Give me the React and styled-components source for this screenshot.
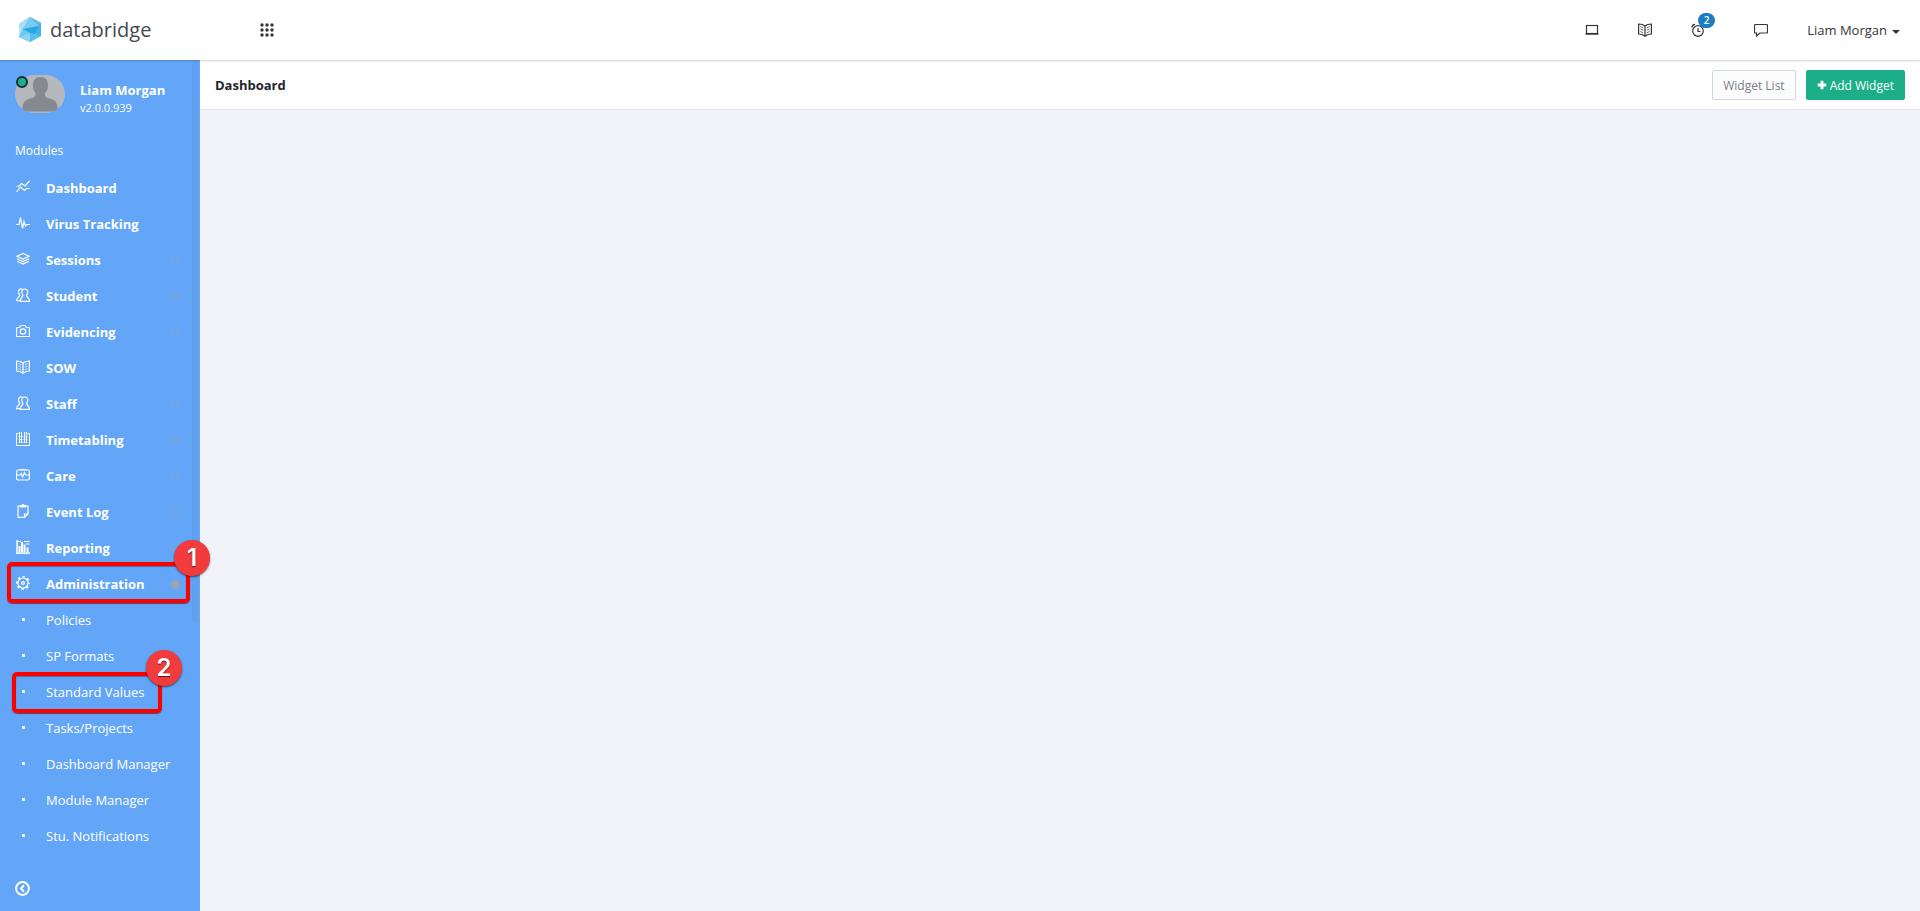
import React from "react";
import styled, { createGlobalStyle } from "styled-components";

const GlobalStyle = createGlobalStyle`
  * {
    box-sizing: border-box;
  }
  body {
    margin: 0;
    font-family: "Open Sans", "Noto Sans", sans-serif;
    font-size: 13px;
    color: #3b3f4a;
    background-color: #f2f3f8;
  }
  a {
    color: inherit;
    text-decoration: none;
  }
  button {
    font-family: inherit;
    cursor: pointer;
  }
`;

const Page = styled.div`
  min-height: 100vh;
  display: flex;
  flex-direction: column;
`;

const Header = styled.header`
  position: relative;
  z-index: 1;
  height: 60px;
  display: flex;
  align-items: center;
  padding: 0 20px 0 18px;
  background-color: #fff;
  box-shadow: 0 1px 2px rgba(0, 0, 0, 0.18);
`;

const Brand = styled.a`
  width: 242px;
  display: flex;
  align-items: center;
  gap: 8px;
  font-size: 20px;
  line-height: 28px;
  color: #444a50;
`;

const IconButton = styled.button`
  position: relative;
  display: flex;
  padding: 0;
  border: none;
  background: none;
  color: #33363c;
`;

const HeaderTools = styled.div`
  margin-left: auto;
  display: flex;
  align-items: center;
  gap: 39px;
`;

const ReminderButton = styled(IconButton)`
  margin-right: 10px;
`;

const Count = styled.span`
  position: absolute;
  top: -10px;
  left: 7px;
  width: 17px;
  height: 15px;
  border-radius: 8px;
  background-color: #1c7cc0;
  color: #fff;
  font-size: 10px;
  font-weight: 600;
  line-height: 15px;
  text-align: center;
`;

const UserMenu = styled.button`
  display: flex;
  align-items: center;
  gap: 5px;
  padding: 0;
  border: none;
  background: none;
  color: #33363c;
  font-size: 13px;
  &::after {
    content: "";
    margin-top: 3px;
    border: 4px solid transparent;
    border-top-color: currentColor;
    border-bottom: none;
  }
`;

const Body = styled.div`
  flex: 1;
  display: flex;
`;

const Sidebar = styled.aside`
  position: relative;
  width: 200px;
  flex-shrink: 0;
  display: flex;
  flex-direction: column;
  background-color: #63a6f7;
  color: #fff;
`;

const ScrollThumb = styled.div`
  position: absolute;
  top: 0;
  right: 2px;
  width: 6px;
  height: 66%;
  border-radius: 0 0 3px 3px;
  background-color: #5fa0f0;
`;

const Profile = styled.div`
  display: flex;
  gap: 15px;
  padding: 15px 15px 0;
`;

const Avatar = styled.div`
  position: relative;
  width: 50px;
  height: 38px;
  svg {
    display: block;
    border-radius: 19px;
  }
`;

const Status = styled.span`
  position: absolute;
  top: 1px;
  left: 1px;
  width: 12px;
  height: 12px;
  border: 2px solid #1d2939;
  border-radius: 50%;
  background-color: #1bb18b;
`;

const UserInfo = styled.div`
  padding-top: 6px;
  line-height: 18px;
`;

const UserName = styled.div`
  font-weight: 700;
`;

const Version = styled.div`
  font-size: 11px;
`;

const MenuTitle = styled.h2`
  margin: 25px 15px 10px;
  font-size: 12px;
  font-weight: 400;
  line-height: 18px;
`;

const Menu = styled.ul`
  margin: 0;
  padding: 0;
  list-style: none;
`;

const MenuItem = styled.li`
  position: relative;
`;

const MenuLink = styled.a`
  height: 36px;
  display: flex;
  align-items: center;
  padding: 0 20px 0 16px;
  font-weight: ${({ $sub }) => ($sub ? 400 : 700)};
`;

const MenuIcon = styled.span`
  width: 14px;
  margin-right: 16px;
  display: flex;
  justify-content: center;
  padding-bottom: 2px;
`;

const Bullet = styled.span`
  width: 3px;
  height: 3px;
  border-radius: 1px;
  background-color: #fff;
`;

const Ring = styled.span`
  width: 9px;
  height: 9px;
  margin-left: auto;
  border: 1px solid ${({ $open }) => ($open ? "#9aa5ae" : "#86a4c6")};
  border-radius: 50%;
  background-color: ${({ $open }) => ($open ? "#9aa5ae" : "transparent")};
`;

const Highlight = styled.div`
  position: absolute;
  z-index: 2;
  top: ${({ $wide }) => ($wide ? "-4px" : "-2px")};
  left: ${({ $wide }) => ($wide ? "7px" : "12px")};
  width: ${({ $wide }) => ($wide ? "183px" : "150px")};
  height: 41px;
  border: 4px solid #fe0000;
  border-radius: 5px;
  box-shadow: 0 1px 1px rgba(80, 0, 0, 0.6), inset 0 1px 1px rgba(80, 0, 0, 0.4);
  pointer-events: none;
`;

const Step = styled.span`
  position: absolute;
  top: -26px;
  right: -24px;
  width: 36px;
  height: 36px;
  border-radius: 50%;
  background-color: #f23b3d;
  box-shadow: 0 1px 2px rgba(0, 0, 0, 0.6);
  font-family: Inter, "Open Sans", sans-serif;
  font-size: 24px;
  font-weight: 600;
  line-height: 36px;
  text-align: center;
  text-shadow: 0 1px 1px rgba(0, 0, 0, 0.6);
`;

const SidebarFooter = styled.div`
  margin-top: auto;
  padding: 0 15px 15px;
  button {
    color: #fff;
  }
`;

const Main = styled.main`
  flex: 1;
`;

const Toolbar = styled.div`
  height: 50px;
  display: flex;
  align-items: center;
  gap: 10px;
  padding: 1px 15px 0;
  background-color: #fff;
  border-bottom: 1px solid #e1e5ea;
`;

const PageTitle = styled.h1`
  margin: 0 auto 0 0;
  font-size: 13px;
  font-weight: 700;
  color: #23262e;
`;

const Button = styled.button`
  height: 30px;
  display: flex;
  align-items: center;
  gap: 3px;
  padding: 0 10px;
  border: 1px solid ${({ $primary }) => ($primary ? "#1bae88" : "#cfd7df")};
  border-radius: 2px;
  background-color: ${({ $primary }) => ($primary ? "#1bae88" : "#fcfcfc")};
  color: ${({ $primary }) => ($primary ? "#fff" : "#788089")};
  font-size: 12px;
`;

const icons = {
  trend: (
    <>
      <path d="M0.500 6.500H2.500L5.500 3.500 9 6 13.500 1" />
      <path d="M0.500 12 4.500 7 8.500 10.500 10.500 8.500H13.500" />
    </>
  ),
  pulse: <path d="M0 8.500h3l1.500-7 2 11 1.500-7 1.500 4.500 1-1.500h3.500" />,
  layers: (
    <>
      <path d="M7 1.500 13 4.300 7 7.100 1 4.300z" />
      <path d="M1 6.800 7 9.500 13 6.800M1 9.200 7 12 13 9.200" />
    </>
  ),
  people: (
    <>
      <path d="M8.700 1c2 0 3 1.400 3 3.200 0 1.700-.7 2.500-1.200 3.300 0 1.800 3 2 3 5.900H4.200c0-3.900 2.800-4.100 2.800-5.900-.5-.8-1.300-1.600-1.300-3.300C5.700 2.400 6.700 1 8.700 1z" />
      <path d="M6.500 1.200C4.200.1 2.500 1.500 2.500 3.900c0 1.700.6 2.500 1.200 3.300C3.700 9 .7 9.200.7 12.600h3" />
    </>
  ),
  camera: (
    <>
      <path d="M.6 4.500q0-1 1-1H3.500L5 1.500h4l1.500 2h2q1 0 1 1v7q0 1-1 1h-11q-1 0-1-1z" />
      <circle cx="7" cy="7.500" r="2.700" />
    </>
  ),
  book: (
    <>
      <path d="M.6 1c2.400 0 4.700.5 6.400 2C8.700 1.500 11 1 13.400 1v10C11 11 9 11.700 7 13.300 5 11.700 3 11 .6 11zM7 3v10" />
      <path d="M2.300 3.500l3 1.300M2.300 6l3 1.300M2.300 8.500l3 1.300M11.700 3.500l-3 1.300M11.700 6l-3 1.300M11.700 8.500l-3 1.300" strokeWidth="0.700" />
    </>
  ),
  calendar: (
    <>
      <path d="M2.500 1.500H.5v12h13v-12h-2" strokeWidth="1" />
      <path d="M3.500 0v11M5.500 0v11M8.500 0v11M10.500 0v11" strokeWidth="1" />
      <path d="M2.500 4.500h9M2.500 7.500h9M2.500 10.500h9" strokeWidth="0.500" />
    </>
  ),
  care: (
    <>
      <rect x="0.600" y="2" width="12.800" height="10" rx="1.800" />
      <path d="M.6 7H4l1.200-1.500L6.500 9l2-4.500 1 2.500h4M3.500 1.500h7" />
    </>
  ),
  clipboard: (
    <>
      <path d="M8.500 13.400H2V2h10v8zM8.500 13.400V10H12" />
      <path d="M4.500 3V1.500h1.500L7 .5l1 1h1.500V3z" fill="currentColor" />
    </>
  ),
  chart: (
    <>
      <path d="M1 0v13.300H14" strokeWidth="1.500" />
      <path d="M3.500 12.500V6M6 12.500V2M8.500 12.500V4.500M11.500 12.500V7.500" strokeWidth="2" />
      <path d="M2 1.500h3M8 1.500h5.500M10 4h3.500" strokeWidth="1" />
    </>
  ),
  gear: (
    <>
      <circle cx="7" cy="7" r="5" />
      <circle cx="7" cy="7" r="6.200" strokeDasharray="2.400 2.470" strokeDashoffset="1.200" strokeWidth="1.600" />
      <circle cx="7" cy="7" r="1.400" />
    </>
  ),
  grid: (
    <g fill="currentColor" stroke="none">
      {[2, 7, 12].map((y) => [2, 7, 12].map((x) => <circle key={`${x}-${y}`} cx={x} cy={y} r="1.700" />))}
    </g>
  ),
  laptop: (
    <>
      <rect x="1.500" y="2.500" width="11" height="8" />
      <path d="M.5 11h13" strokeWidth="1.500" />
    </>
  ),
  alarm: (
    <>
      <circle cx="7" cy="8" r="5.300" />
      <path d="M7 5v3.500h2.500M1 4.500Q1 1.500 4 1.300M10 1.300Q13 1.500 13 4.500" />
    </>
  ),
  chat: <path d="M1.500 1.500h11q1 0 1 1v6.500q0 1-1 1H6L2.500 13v-3h-1q-1 0-1-1V2.500q0-1 1-1z" />,
  back: (
    <>
      <circle cx="7" cy="7" r="6" strokeWidth="1.800" />
      <path d="M8.500 4 5.500 7l3 3" strokeWidth="1.800" />
    </>
  ),
  plus: <path d="M7 1v12M1 7h12" strokeWidth="4" />,
};

function Icon({ name, size = 14 }) {
  return (
    <svg width={size} height={size} viewBox="0 0 14 14" fill="none" stroke="currentColor" strokeWidth="1.2" aria-hidden="true">
      {icons[name]}
    </svg>
  );
}

function Logo() {
  return (
    <svg width="24" height="26" viewBox="0 0 24 26" aria-hidden="true">
      <path d="M12 0 23 6V19L12 25 1 20V7z" fill="#4bb8ea" />
      <path d="M12 0 1 7 5 12z" fill="#a9def6" />
      <path d="M12 0 5 12 21 9z" fill="#7accf2" />
      <path d="M12 0 23 6 21 9z" fill="#55b9e9" />
      <path d="M1 7 5 12 1 20z" fill="#b4e2f7" />
      <path d="M5 12 21 9 17 17 4 14z" fill="#27a7e3" />
      <path d="M21 9 23 6V19L17 17z" fill="#45b3e6" />
      <path d="M5 12 1 20 12 16z" fill="#6fc8f0" />
      <path d="M1 20 12 16 12 25z" fill="#8dd3f4" />
      <path d="M12 16 17 17 23 19 12 25z" fill="#58bfee" />
    </svg>
  );
}

function Person() {
  return (
    <svg width="50" height="38" viewBox="0 0 50 38" role="img" aria-label="Liam Morgan">
      <rect width="50" height="38" fill="#b4b8bd" />
      <path d="M25.500 2c5 0 7.500 3 7.500 8 0 4-1 6-3 8-.5 4 1 4.500 6 6 6 2 6.500 5 7 12.500H7C7.500 29 8.500 26 14 24c5-1.500 7-2 6.500-6-2-2-2.500-4-2.500-8 0-5 2.500-8 7.500-8z" fill="#868a90" />
    </svg>
  );
}

const modules = [
  { label: "Dashboard", icon: "trend" },
  { label: "Virus Tracking", icon: "pulse" },
  { label: "Sessions", icon: "layers", expandable: true },
  { label: "Student", icon: "people", expandable: true },
  { label: "Evidencing", icon: "camera", expandable: true },
  { label: "SOW", icon: "book" },
  { label: "Staff", icon: "people", expandable: true },
  { label: "Timetabling", icon: "calendar", expandable: true },
  { label: "Care", icon: "care", expandable: true },
  { label: "Event Log", icon: "clipboard", expandable: true },
  { label: "Reporting", icon: "chart", expandable: true },
  { label: "Administration", icon: "gear", expandable: true, open: true, step: 1 },
  { label: "Policies" },
  { label: "SP Formats" },
  { label: "Standard Values", step: 2 },
  { label: "Tasks/Projects" },
  { label: "Dashboard Manager" },
  { label: "Module Manager" },
  { label: "Stu. Notifications" },
];

function ModuleItem({ item }) {
  const { label, icon, expandable, open, step } = item;
  return (
    <MenuItem>
      <MenuLink href="#" $sub={!icon}>
        <MenuIcon>{icon ? <Icon name={icon} /> : <Bullet />}</MenuIcon>
        {label}
        {expandable && <Ring $open={open} />}
      </MenuLink>
      {step && (
        <Highlight $wide={Boolean(icon)}>
          <Step>{step}</Step>
        </Highlight>
      )}
    </MenuItem>
  );
}

function App() {
  return (
    <Page>
      <GlobalStyle />
      <Header>
        <Brand href="#">
          <Logo />
          databridge
        </Brand>
        <IconButton aria-label="Apps"><Icon name="grid" /></IconButton>
        <HeaderTools>
          <IconButton aria-label="Devices"><Icon name="laptop" /></IconButton>
          <IconButton aria-label="Guide"><Icon name="book" /></IconButton>
          <ReminderButton aria-label="Reminders">
            <Icon name="alarm" />
            <Count>2</Count>
          </ReminderButton>
          <IconButton aria-label="Messages"><Icon name="chat" /></IconButton>
          <UserMenu>Liam Morgan</UserMenu>
        </HeaderTools>
      </Header>
      <Body>
        <Sidebar>
          <ScrollThumb />
          <Profile>
            <Avatar>
              <Person />
              <Status />
            </Avatar>
            <UserInfo>
              <UserName>Liam Morgan</UserName>
              <Version>v2.0.0.939</Version>
            </UserInfo>
          </Profile>
          <MenuTitle>Modules</MenuTitle>
          <nav>
            <Menu>
              {modules.map((item) => <ModuleItem key={item.label} item={item} />)}
            </Menu>
          </nav>
          <SidebarFooter>
            <IconButton aria-label="Collapse menu"><Icon name="back" size={15} /></IconButton>
          </SidebarFooter>
        </Sidebar>
        <Main>
          <Toolbar>
            <PageTitle>Dashboard</PageTitle>
            <Button>Widget List</Button>
            <Button $primary>
              <Icon name="plus" size={10} />
              Add Widget
            </Button>
          </Toolbar>
        </Main>
      </Body>
    </Page>
  );
}

export default App;
